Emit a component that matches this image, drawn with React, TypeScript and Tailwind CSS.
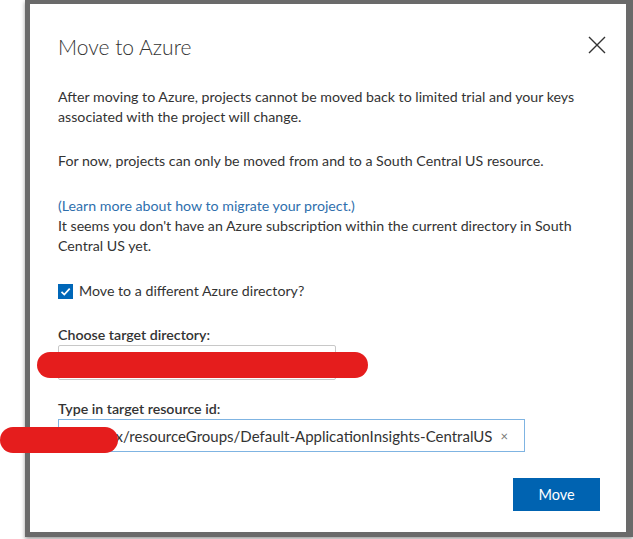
import React, { useState } from 'react'

function CloseIcon() {
  return (
    <svg width="18" height="18" viewBox="0 0 18 18" className="text-[#333]">
      <path d="M1 1 L17 17 M17 1 L1 17" stroke="currentColor" strokeWidth="1.4" fill="none" />
    </svg>
  )
}

function CheckBox({ checked, onToggle }: { checked: boolean; onToggle: () => void }) {
  return (
    <button
      onClick={onToggle}
      className={
        checked
          ? 'w-[15px] h-[15px] bg-[#0067b8] flex items-center justify-center'
          : 'w-[15px] h-[15px] border border-[#333] bg-white'
      }
    >
      {checked && (
        <svg width="11" height="11" viewBox="0 0 11 11">
          <path d="M1.5 5.8 L4.3 8.5 L9.7 2.6" stroke="white" strokeWidth="1.7" fill="none" />
        </svg>
      )}
    </button>
  )
}

export default function App() {
  const [otherDir, setOtherDir] = useState(true)
  const resourceId = '/subscriptions/xxxxxxxx/resourceGroups/Default-ApplicationInsights-CentralUS'

  return (
    <div
      className="w-[633px] h-[539px] bg-white flex overflow-hidden text-[#333]"
      style={{ fontFamily: 'Lato, "Open Sans", sans-serif' }}
    >
      <div className="w-[25px] shrink-0" />
      {/* grey window frame */}
      <div className="w-[608px] h-[537px] bg-[#6a6a6a] pt-[4px] pl-[5px] pr-[7px] pb-[5px] shadow-[0_2px_4px_rgba(0,0,0,0.4)]">
        <div className="relative w-full h-full bg-white pl-[28px] pr-[26px] pt-[29px]">
          <div className="flex items-start justify-between">
            <h1 className="text-[21px] leading-[28px] font-light text-[#333]">Move to Azure</h1>
            <button className="mt-[3px] mr-[-6px]">
              <CloseIcon />
            </button>
          </div>

          <div className="mt-[26px] text-[14.2px] leading-[20px]">
            <p>
              After moving to Azure, projects cannot be moved back to limited trial and your keys
              associated with the project will change.
            </p>
            <p className="mt-[24px]">
              For now, projects can only be moved from and to a South Central US resource.
            </p>
            <p className="mt-[25px]">
              <a className="text-[#2f6fad]">(Learn more about how to migrate your project.)</a>
              <br />
              It seems you don't have an Azure subscription within the current directory in South
              Central US yet.
            </p>

            <label className="mt-[25px] flex items-center gap-[6px]">
              <CheckBox checked={otherDir} onToggle={() => setOtherDir(!otherDir)} />
              <span>Move to a different Azure directory?</span>
            </label>

            <div className="mt-[24px] font-semibold">Choose target directory:</div>
            <div className="w-[278px] h-[35px] border border-[#c8c8c8] rounded-[2px]" />

            <div className="mt-[19px] font-semibold">Type in target resource id:</div>
            <div className="w-[467px] h-[33px] border border-[#7fb4e2] flex items-center pr-[16px]">
              <div className="flex-1 min-w-0 overflow-hidden flex justify-end pr-[8px]">
                <span className="whitespace-nowrap text-[15px]">{resourceId}</span>
              </div>
              <span className="text-[#777] text-[13px]">×</span>
            </div>
          </div>

          <div className="flex justify-end mt-[26px]">
            <button className="w-[87px] h-[33px] bg-[#0063b1] text-white text-[14.5px]">Move</button>
          </div>

          {/* redaction marks */}
          <div className="absolute left-[7px] top-[348px] w-[331px] h-[26px] rounded-full bg-[#e51d1d]" />
          <div className="absolute left-[-30px] top-[423px] w-[118px] h-[26px] rounded-full bg-[#e51d1d]" />
        </div>
      </div>
    </div>
  )
}
